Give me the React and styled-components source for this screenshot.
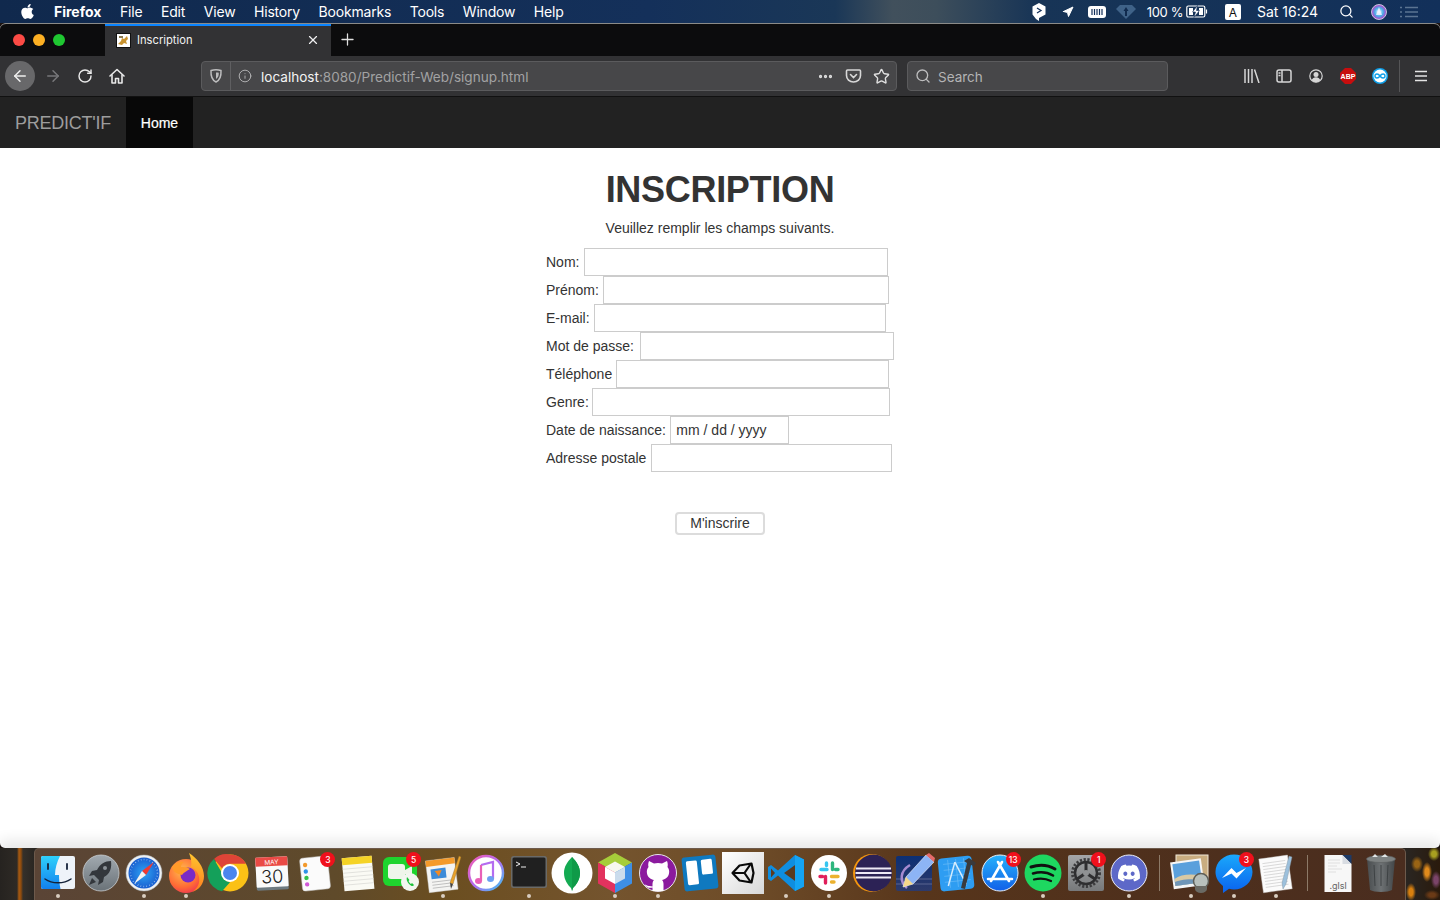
import React from 'react';
import styled, { createGlobalStyle } from 'styled-components';
import { FaApple, FaDiscord } from 'react-icons/fa';
import { ArrowLeft, ArrowRight, RotateCw, Info, Ellipsis, Star, Search, X, Plus, Navigation } from 'lucide-react';

const GlobalStyle = createGlobalStyle`
  html, body {
    margin: 0;
    padding: 0;
    height: 100%;
    overflow: hidden;
    background: #1a1210;
  }
  * { box-sizing: border-box; }
`;

const Screen = styled.div`
  width: 1440px;
  height: 900px;
  display: flex;
  flex-direction: column;
  overflow: hidden;
  font-family: "Liberation Sans", Arial, sans-serif;
`;

/* mac menu bar */
const MenuBar = styled.div`
  height: 23px;
  flex: none;
  display: flex;
  align-items: center;
  padding: 0 22px 0 19px;
  color: #fff;
  font-family: Inter, "Liberation Sans", sans-serif;
  font-size: 14px;
  background: linear-gradient(90deg, #10294d 0%, #14305a 45%, #1a3757 58%, #41505c 62%, #3d4e5b 65%, #173456 72%, #12305a 100%);
`;

const MenuItems = styled.div`
  display: flex;
  align-items: center;
  gap: 18.6px;
  margin-left: 18px;
`;

const MenuItem = styled.span`
  font-weight: ${(p) => (p.$bold ? 700 : 400)};
  letter-spacing: ${(p) => (p.$bold ? '0' : '-0.2px')};
`;

const MenuStatus = styled.div`
  margin-left: auto;
  display: flex;
  align-items: center;
  height: 100%;
`;

const StatusSlot = styled.div`
  width: ${(p) => p.$w}px;
  margin-left: ${(p) => p.$ml || 0}px;
  flex: none;
  display: flex;
  align-items: center;
  justify-content: center;
  white-space: nowrap;
`;

const BatteryText = styled.span`
  font-size: 13px;
  letter-spacing: -0.3px;
`;

const ClockText = styled.span`
  font-size: 14px;
`;

/* browser window */
const BrowserWindow = styled.div`
  flex: 1;
  display: flex;
  flex-direction: column;
  background: #fff;
  border-radius: 6px 6px 5px 5px;
  overflow: hidden;
  border-top: 1px solid #8b8b88;
`;

const TabStrip = styled.div`
  height: 32px;
  flex: none;
  display: flex;
  align-items: stretch;
  background: #0c0c0d;
`;

const Lights = styled.div`
  width: 105px;
  display: flex;
  align-items: center;
  gap: 8px;
  padding-left: 13px;
`;

const Light = styled.span`
  width: 12px;
  height: 12px;
  border-radius: 50%;
  background: ${(p) => p.$color};
`;

const ActiveTab = styled.div`
  width: 226px;
  display: flex;
  align-items: center;
  padding: 0 0 2px 11px;
  background: #323234;
  border-top: 2px solid #0a84ff;
  color: #f2f2f2;
  font-family: Inter, "Liberation Sans", sans-serif;
  font-size: 11.2px;
`;

const TabTitle = styled.span`
  margin-left: 6px;
  flex: 1;
`;

const TabClose = styled.span`
  width: 36px;
  display: flex;
  justify-content: center;
`;

const NewTab = styled.div`
  width: 32px;
  padding-bottom: 2px;
  display: flex;
  align-items: center;
  justify-content: center;
`;

const Toolbar = styled.div`
  height: 41px;
  flex: none;
  display: flex;
  align-items: center;
  padding-left: 5px;
  background: #323234;
  color: #e4e4e4;
  border-bottom: 1px solid #111;
  font-family: Inter, "Liberation Sans", sans-serif;
`;

const BackButton = styled.div`
  width: 30px;
  height: 30px;
  border-radius: 50%;
  background: #68686a;
  display: flex;
  align-items: center;
  justify-content: center;
  margin-right: 2px;
`;

const ToolSlot = styled.div`
  width: 32px;
  height: 30px;
  flex: none;
  margin-left: ${(p) => p.$ml || 0}px;
  display: flex;
  align-items: center;
  justify-content: center;
`;

const UrlBar = styled.div`
  width: ${(p) => p.$w}px;
  height: 30px;
  flex: none;
  margin-left: ${(p) => p.$ml}px;
  display: flex;
  align-items: center;
  background: #474749;
  border: 1px solid #5b5b5d;
  border-radius: 4px;
  font-size: 14px;
`;

const UrlSlot = styled.span`
  width: ${(p) => p.$w}px;
  flex: none;
  height: 100%;
  display: flex;
  align-items: center;
  justify-content: center;
  border-right: ${(p) => (p.$divider ? '1px solid #5f5f61' : 'none')};
`;

const UrlText = styled.span`
  flex: 1;
  margin-left: 2px;
  padding-top: 2px;
  color: #a2a2a3;
  font-size: 13.55px;
  white-space: nowrap;
`;

const UrlHost = styled.span`
  color: #f4f4f4;
`;

const SearchText = styled.span`
  padding-top: 2px;
  color: #b4b4b5;
  font-size: 13.5px;
`;

const ToolDivider = styled.div`
  width: 1px;
  height: 32px;
  background: #555557;
  margin: 0 5px 0 3px;
`;

/* site navbar */
const NavBar = styled.nav`
  height: 51px;
  flex: none;
  display: flex;
  background: #222;
`;

const Brand = styled.span`
  width: 126px;
  padding: 2px 0 0 15px;
  display: flex;
  align-items: center;
  color: #9d9d9d;
  font-size: 18px;
  letter-spacing: -0.25px;
`;

const NavActive = styled.span`
  width: 67px;
  display: flex;
  align-items: center;
  justify-content: center;
  background: #080808;
  color: #fff;
  font-size: 14px;
  -webkit-text-stroke: 0.2px #fff;
`;

/* page */
const Page = styled.main`
  flex: 1;
  display: flex;
  flex-direction: column;
  align-items: center;
  color: #333;
  font-size: 14px;
  line-height: 20px;
`;

const Title = styled.h1`
  margin: 22px 0 8px;
  font-size: 36px;
  line-height: 39.6px;
  font-weight: 700;
  letter-spacing: -0.3px;
  color: #333;
`;

const Lead = styled.p`
  margin: 0 0 10px;
  color: #333;
`;

const SignupForm = styled.form`
  width: 348px;
  display: flex;
  flex-direction: column;
`;

const Row = styled.label`
  height: 28px;
  display: flex;
  align-items: center;
  gap: ${(p) => p.$gap}px;
  white-space: nowrap;
`;

const Field = styled.input`
  width: ${(p) => p.$w}px;
  height: 28px;
  padding: 0 5.5px;
  border: 1px solid #ccc;
  border-radius: 0;
  background: #fff;
  outline: none;
  font-family: inherit;
  font-size: 14px;
  color: #333;
  &::placeholder { color: #333; opacity: 1; }
`;

const SubmitButton = styled.button`
  width: 90px;
  height: 23px;
  margin-top: 40px;
  padding: 0;
  background: #fff;
  border: 2px solid #dcdcdc;
  border-radius: 4px;
  font-family: inherit;
  font-size: 14px;
  color: #333;
`;

/* dock */
const DockArea = styled.div`
  height: 52px;
  flex: none;
  display: flex;
  justify-content: center;
  background:
    radial-gradient(ellipse 6px 7px at 1434px 6px, #a8a020 40%, transparent),
    radial-gradient(ellipse 5px 10px at 1427px 24px, #e08a1c 40%, transparent),
    radial-gradient(ellipse 6px 8px at 1417px 16px, #9a6414 40%, transparent),
    radial-gradient(ellipse 5px 9px at 1436px 32px, #7a4468 40%, transparent),
    radial-gradient(ellipse 5px 9px at 1411px 44px, #d8800f 40%, transparent),
    radial-gradient(ellipse 8px 5px at 1432px 47px, #6a3a16 40%, transparent),
    linear-gradient(90deg, #262320 0, #2e2a25 17px, #a85a10 19px, #8c4a0e 21px, #35302a 23px, #2a2622 34px, #2a2622 1406px, #2a1a0c 100%);
  box-shadow: 0 -8px 12px rgba(0, 0, 0, 0.09);
`;

const Dock = styled.div`
  width: 1372px;
  height: 52px;
  display: flex;
  align-items: flex-start;
  padding: 2px 2px 0 1.6px;
  border: 1px solid #6d5a4c;
  border-bottom: 0;
  border-radius: 5px 5px 0 0;
  background: linear-gradient(90deg, #5a4436 0%, #5f4a2a 22%, #6b4e20 30%, #74542e 42%, #6e4c28 52%, #57351b 65%, #4f301c 80%, #4a2d1f 100%);
`;

const DockSlot = styled.div`
  position: relative;
  width: 42.84px;
  height: 44px;
  flex: none;
  display: flex;
  justify-content: center;
  svg { flex: none; overflow: visible; }
`;

const DockDot = styled.span`
  position: absolute;
  left: 50%;
  bottom: -3px;
  width: 4px;
  height: 4px;
  margin-left: -2px;
  border-radius: 50%;
  background: #d8cdc0;
`;

const DockBadge = styled.span`
  position: absolute;
  top: 1px;
  right: 1px;
  width: 15px;
  height: 15px;
  border-radius: 50%;
  background: #f0101c;
  color: #fff;
  display: flex;
  align-items: center;
  justify-content: center;
  font-family: Inter, "Liberation Sans", sans-serif;
  font-size: 8.5px;
  font-weight: 500;
`;

const DockSeparator = styled.div`
  width: 19.2px;
  flex: none;
  height: 36px;
  margin-top: 4px;
  display: flex;
  justify-content: center;
  &::after {
    content: '';
    width: 1px;
    background: #8d7a68;
  }
`;

const TEXT_FONT = 'Inter, "Liberation Sans", sans-serif';

const Svg = ({ size = 44, box = 44, children, ...rest }) => (
  <svg width={size} height={size} viewBox={`0 0 ${box} ${box}`} fill="none" {...rest}>
    {children}
  </svg>
);

const Finder = () => (
  <Svg>
    <defs>
      <linearGradient id="fl" x1="0" y1="0" x2="0" y2="1"><stop offset="0" stopColor="#2fd0fb" /><stop offset="1" stopColor="#1280ee" /></linearGradient>
    </defs>
    <rect x="5" y="5" width="34" height="33" rx="2" fill="#eef3f9" />
    <path d="M7 5h17c-3 6-5 12-5 19h4c0 5 .5 9 1.500 14H7a2 2 0 0 1-2-2V7a2 2 0 0 1 2-2z" fill="url(#fl)" />
    <path d="M12 13v5M31 13v5" stroke="#15233a" strokeWidth="1.800" strokeLinecap="round" />
    <path d="M9 28c7 5 19 5 26 0" stroke="#15233a" strokeWidth="1.500" strokeLinecap="round" />
  </Svg>
);

const Launchpad = () => (
  <Svg>
    <defs>
      <linearGradient id="lp" x1="0" y1="0" x2="0" y2="1"><stop offset="0" stopColor="#a2aab0" /><stop offset="1" stopColor="#6a7278" /></linearGradient>
    </defs>
    <circle cx="22" cy="22" r="18" fill="url(#lp)" stroke="#c8ccce" strokeWidth="0.800" />
    <path d="M32 10c-6 0-11 3-14 9l-5 1-3 5 5-1 5 5-1 5 5-3 1-5c6-3 8-9 7-16z" fill="#33373c" />
    <path d="M13 27l-3 7 7-3z" fill="#33373c" />
    <circle cx="26" cy="17" r="2" fill="#8c9298" />
  </Svg>
);

const Safari = () => (
  <Svg>
    <defs>
      <radialGradient id="sf"><stop offset="0" stopColor="#2ea4f4" /><stop offset="1" stopColor="#1a5fd0" /></radialGradient>
    </defs>
    <circle cx="22" cy="22" r="18" fill="#eef1f3" stroke="#aab0b5" strokeWidth="0.500" />
    <circle cx="22" cy="22" r="15.500" fill="url(#sf)" />
    <circle cx="22" cy="22" r="13.500" stroke="#cfe6fa" strokeWidth="1.500" strokeDasharray="0.500 2.500" />
    <path d="M32 11l-12 9 4 4z" fill="#f03a32" />
    <path d="M12 33l8-13 4 4z" fill="#f2f2f2" />
  </Svg>
);

const Firefox = () => (
  <Svg>
    <defs>
      <radialGradient id="ff1" cx="0.400" cy="0.350" r="0.800"><stop offset="0" stopColor="#ffbd4f" /><stop offset="0.600" stopColor="#ff6a35" /><stop offset="1" stopColor="#e8205c" /></radialGradient>
      <linearGradient id="ff2" x1="0.600" y1="0" x2="0.500" y2="1"><stop offset="0" stopColor="#ffc82f" /><stop offset="1" stopColor="#ff7a1f" /></linearGradient>
    </defs>
    <circle cx="21" cy="25" r="17" fill="url(#ff1)" />
    <path d="M24 2c8 5 15 14 15 23 0 8-5 14-12 16 6-4 8-9 7-15-1-5-4-8-8-10 1-4 0-9-2-14z" fill="url(#ff2)" />
    <circle cx="23" cy="24" r="7.500" fill="#7a2bc6" />
    <path d="M7 16c3-5 8-6 12-5-2 1-3 3-3 5 3 0 6 0 9 2-3 2-6 3-8 6-5-1-9-3-10-8z" fill="#ff9a2a" />
  </Svg>
);

const Chrome = () => (
  <Svg>
    <g transform="translate(1 0)">
      <circle cx="22" cy="22" r="18.500" fill="#fbc116" />
      <path d="M22 3.500a18.500 18.500 0 0 1 16 9.250H22a9.250 9.250 0 0 0-8 4.620L6 7.900A18.500 18.500 0 0 1 22 3.500z" fill="#de4437" />
      <path d="M5.900 8.100L14 22a9.250 9.250 0 0 0 8 9.250l-8 9.100A18.500 18.500 0 0 1 5.900 8.100z" fill="#14a05a" />
      <circle cx="22" cy="22" r="9" fill="#fff" />
      <circle cx="22" cy="22" r="7" fill="#4a85ed" />
    </g>
  </Svg>
);

const Calendar = () => (
  <Svg>
    <g transform="rotate(-3 22 22)">
      <rect x="6" y="7" width="32" height="32" rx="1.500" fill="#6e7a80" />
      <rect x="6" y="6" width="32" height="30" rx="1" fill="#fafafa" />
      <rect x="6" y="6" width="32" height="9" fill="#ea4a45" />
      <text x="22" y="13.500" textAnchor="middle" fontFamily={TEXT_FONT} fontSize="6.500" fill="#fff">MAY</text>
      <text x="22" y="32" textAnchor="middle" fontFamily={TEXT_FONT} fontSize="18" fontWeight="300" fill="#222">30</text>
    </g>
  </Svg>
);

const Reminders = () => (
  <Svg>
    <g transform="rotate(-6 22 22)">
      <rect x="8" y="6" width="28" height="33" rx="3" fill="#fbfbfb" stroke="#c9c9c9" strokeWidth="0.500" />
      <circle cx="13" cy="13" r="2.200" fill="#f39a2c" />
      <circle cx="13" cy="19.500" r="2.200" fill="#2f93e8" />
      <circle cx="13" cy="26" r="2.200" fill="#35c24a" />
      <circle cx="13" cy="32.500" r="2.200" fill="#d159d8" />
    </g>
  </Svg>
);

const Notes = () => (
  <Svg>
    <g transform="rotate(-5 22 22)">
      <rect x="7" y="6" width="30" height="33" fill="#fafaf4" />
      <rect x="7" y="6" width="30" height="7" fill="#f5d326" />
      <path d="M7 17h30M7 21h30M7 25h30M7 29h30M7 33h30" stroke="#d8d8d4" strokeWidth="0.700" />
    </g>
  </Svg>
);

const FaceTime = () => (
  <Svg>
    <rect x="4" y="6" width="34" height="29" rx="6" fill="#1ed42e" />
    <rect x="9" y="13" width="17" height="15" rx="3" fill="#eef5ea" />
    <path d="M26 19l7-4v12l-7-4z" fill="#eef5ea" />
    <circle cx="31" cy="31" r="9" fill="#f2f5f0" />
    <path d="M28 26c-1 2 0 5 2 7s4 3 5 1l-2-2-1 1c-1-.5-2-2-2.500-3l1-1z" fill="#1cc23a" />
  </Svg>
);

const Pages = () => (
  <Svg>
    <g transform="rotate(-7 21 22)">
      <rect x="6" y="8" width="29" height="32" fill="#f4f4f2" stroke="#c8c8c8" strokeWidth="0.400" />
      <rect x="6" y="8" width="29" height="6" fill="#f49a2a" />
      <rect x="10" y="17" width="15" height="10" fill="#3c8bd8" />
      <path d="M14 19h7l-3.500 6z" fill="#f08a24" />
      <path d="M10 30h21M10 33h21M10 36h21" stroke="#b5b5b5" strokeWidth="0.800" />
    </g>
    <path d="M38 5l2 1-8 27-3-1z" fill="#e8a12a" stroke="#8a6a2a" strokeWidth="0.400" />
    <path d="M29 32l3 1-2 5z" fill="#444" />
  </Svg>
);

const Music = () => (
  <Svg>
    <defs>
      <linearGradient id="mu" x1="0" y1="0" x2="1" y2="1"><stop offset="0" stopColor="#f35bb0" /><stop offset="0.500" stopColor="#b46cf0" /><stop offset="1" stopColor="#3cc2f0" /></linearGradient>
    </defs>
    <circle cx="22" cy="22" r="17" fill="#fff" stroke="url(#mu)" strokeWidth="2.500" />
    <path d="M17 14l12-3v17" stroke="#b46cf0" strokeWidth="2.200" />
    <path d="M17 14v16" stroke="#e860b8" strokeWidth="2.200" />
    <ellipse cx="14.500" cy="30" rx="3.500" ry="3" fill="#e860b8" />
    <ellipse cx="26.500" cy="28" rx="3.500" ry="3" fill="#6ca0f0" />
  </Svg>
);

const Terminal = () => (
  <Svg>
    <rect x="4" y="5" width="36" height="32" rx="2.500" fill="#6a6a68" />
    <rect x="5.500" y="6.500" width="33" height="29" rx="1.500" fill="#202020" />
    <path d="M9 11l4 2-4 2" stroke="#eee" strokeWidth="1" />
    <path d="M14 16h5" stroke="#eee" strokeWidth="1" />
  </Svg>
);

const Mongo = () => (
  <Svg>
    <circle cx="22" cy="22" r="20.500" fill="#fff" />
    <path d="M22 6c5 5 8 10 8 16 0 7-4 12-7 15l-1 3-1-3c-3-3-7-8-7-15 0-6 3-11 8-16z" fill="#13aa52" />
    <path d="M22 6c5 5 8 10 8 16 0 7-4 12-7 15l-1 3z" fill="#0f9a48" />
  </Svg>
);

const NetBeans = () => (
  <Svg>
    <path d="M22 2l17 9.500-17 9.500L5 11.500z" fill="#a6cd3a" />
    <path d="M5 11.500L22 21v21L5 32.500z" fill="#e2325e" />
    <path d="M39 11.500L22 21v21l17-9.500z" fill="#3e8fe6" />
    <path d="M22 10.500l10 5.500-10 5.500-10-5.500z" fill="#f6f8ee" />
    <path d="M12 16l10 5.500V33l-10-5.500z" fill="#ffffff" />
    <path d="M32 16l-10 5.500V33l10-5.500z" fill="#cbdcec" />
  </Svg>
);

const GitHub = () => (
  <Svg>
    <circle cx="22" cy="22" r="18.500" fill="#8b1a9e" stroke="#e8e4ea" strokeWidth="1" />
    <path d="M13 10l5 2.500c2.500-.7 5.500-.7 8 0l5-2.500c.8 2 1 4 .5 6 1.500 2 2 4 1.500 6.500-.8 4-4 6-7 6.500 1 1 1.500 2.500 1.500 4V40h-11v-3.500c-3 .8-6 .5-8-3 1.500 0 3 2 5 1.500l3 .5V33c0-1.500.5-3 1.500-4-3-.5-6.200-2.500-7-6.500-.5-2.500 0-4.500 1.500-6.500-.5-2-.3-4 .5-6z" fill="#fff" />
  </Svg>
);

const Trello = () => (
  <Svg>
    <g transform="rotate(-6 22 22)">
      <rect x="5" y="5" width="34" height="34" rx="3" fill="#0f79bf" />
      <rect x="9" y="9" width="11" height="24" rx="1.500" fill="#fff" />
      <rect x="24" y="9" width="11" height="15" rx="1.500" fill="#fff" />
    </g>
  </Svg>
);

const Unity = () => (
  <Svg>
    <defs>
      <linearGradient id="un" x1="0" y1="0" x2="1" y2="1"><stop offset="0" stopColor="#fff" /><stop offset="1" stopColor="#d8d8d8" /></linearGradient>
    </defs>
    <rect x="1" y="1" width="42" height="42" fill="url(#un)" />
    <path d="M11.500 22l7-7.500 12-2 2 9.500-2 9.500-12-2z" stroke="#0a0a0a" strokeWidth="2.200" strokeLinejoin="round" />
    <path d="M23.500 22H11.500M23.500 22l6.500-9.500M23.500 22l6.500 9.500" stroke="#0a0a0a" strokeWidth="2.200" />
  </Svg>
);

const VsCode = () => (
  <Svg>
    <path d="M31 4l9 4.500v27L31 40 14 24.500 7 30l-3-2v-12l3-2 7 5.500z" fill="#0f8ee0" />
    <path d="M31 4l9 4.500v27L31 40V30L20 22l11-8z" fill="#14a4f4" />
    <path d="M31 14L20 22l11 8z" fill="#5a3a20" />
    <path d="M7 17.500L11 22l-4 4.500z" fill="#5a3a20" />
  </Svg>
);

const Slack = () => (
  <Svg>
    <circle cx="22" cy="22" r="18" fill="#fff" />
    <path d="M14 18.500h6M19.500 12v2.500" stroke="#36c5f0" strokeWidth="3.400" strokeLinecap="round" />
    <path d="M25.500 12v6.500M31 18.500h-2.500" stroke="#2eb67d" strokeWidth="3.400" strokeLinecap="round" />
    <path d="M24.500 25.500H31M24.500 31h2.500" stroke="#ecb22e" strokeWidth="3.400" strokeLinecap="round" />
    <path d="M18.500 25.500V32M13 25.500h2.500" stroke="#e01e5a" strokeWidth="3.400" strokeLinecap="round" />
  </Svg>
);

const Eclipse = () => (
  <Svg>
    <circle cx="22" cy="22" r="19" fill="#f4960e" />
    <circle cx="23.500" cy="22" r="18.500" fill="#2c2255" />
    <path d="M6 17.500h35M5.500 22h36M6 26.500h35" stroke="#eee9f6" strokeWidth="1.800" />
  </Svg>
);

const Coda = () => (
  <Svg>
    <defs>
      <linearGradient id="cd" x1="0" y1="0" x2="0" y2="1"><stop offset="0" stopColor="#0c2f74" /><stop offset="1" stopColor="#2e3a6a" /></linearGradient>
    </defs>
    <rect x="3" y="5" width="36" height="35" rx="2" fill="url(#cd)" />
    <path d="M3 28h36M3 33h36" stroke="#5a6590" strokeWidth="1" />
    <path d="M14 37c-8-7-7-17 3-23" stroke="#a58ad0" strokeWidth="2.500" />
    <path d="M33 4l8 7-21 22-10 3 3-10z" fill="#8db4f5" stroke="#f4f6ff" strokeWidth="0.600" />
    <path d="M13 26l7 7-10 3z" fill="#f5d78a" />
    <path d="M33 4l3-2 6 5-1 4z" fill="#e56a6a" />
  </Svg>
);

const Xcode = () => (
  <Svg>
    <g transform="rotate(-6 22 22)">
      <rect x="4" y="6" width="34" height="33" rx="4" fill="#2e9df2" />
      <path d="M9 12h26M9 18h26M9 24h26M9 30h26M14 8v28M22 8v28M30 8v28" stroke="#7cc4f7" strokeWidth="0.500" />
      <path d="M21 11l9 23M21 11l-9 23" stroke="#d6ecfd" strokeWidth="1.500" />
    </g>
    <path d="M34 7l7 5-2 3-3-1-6 24-4-1 6-25-3-2z" fill="#3a3a3c" />
  </Svg>
);

const AppStore = () => (
  <Svg>
    <defs>
      <linearGradient id="as" x1="0" y1="0" x2="0" y2="1"><stop offset="0" stopColor="#25b2fb" /><stop offset="1" stopColor="#1260e8" /></linearGradient>
    </defs>
    <circle cx="22" cy="22" r="18" fill="url(#as)" stroke="#e8eef5" strokeWidth="1" />
    <path d="M24 11L13 30M20 11l11 19M10 28h24" stroke="#fff" strokeWidth="2.600" strokeLinecap="round" />
  </Svg>
);

const Spotify = () => (
  <Svg>
    <circle cx="22" cy="22" r="18.500" fill="#1ed760" />
    <path d="M10 16c8-2.500 17-2 24 2" stroke="#111" strokeWidth="3" strokeLinecap="round" />
    <path d="M12 22.500c7-2 14-1.500 20 2" stroke="#111" strokeWidth="2.600" strokeLinecap="round" />
    <path d="M13 28.500c6-1.500 12-1 17 1.500" stroke="#111" strokeWidth="2.200" strokeLinecap="round" />
  </Svg>
);

const SysPrefs = () => (
  <Svg>
    <defs>
      <linearGradient id="sp" x1="0" y1="0" x2="0" y2="1"><stop offset="0" stopColor="#a4a6a8" /><stop offset="1" stopColor="#77797b" /></linearGradient>
    </defs>
    <rect x="4" y="4" width="36" height="36" rx="2" fill="url(#sp)" />
    <circle cx="22" cy="22" r="13.500" stroke="#3c3c3e" strokeWidth="3" strokeDasharray="2.200 1.600" />
    <circle cx="22" cy="22" r="11" stroke="#2e2e30" strokeWidth="2.500" />
    <path d="M22 22V12M22 22l-9 6M22 22l9 6" stroke="#2e2e30" strokeWidth="3" />
    <circle cx="22" cy="22" r="3" fill="#8f9193" />
  </Svg>
);

const Discord = () => (
  <Svg>
    <circle cx="22" cy="22" r="18" fill="#5d68c8" stroke="#eceef8" strokeWidth="1" />
    <FaDiscord x="10" y="10" size="24" color="#fff" />
  </Svg>
);

const Preview = () => (
  <Svg>
    <rect x="7" y="4" width="32" height="27" fill="#c9ad80" stroke="#f0e8d8" strokeWidth="1" />
    <g transform="rotate(-8 20 24)">
      <rect x="3" y="9" width="31" height="27" fill="#f6f6f6" />
      <rect x="5" y="11" width="27" height="22" fill="#5aa0dc" />
      <path d="M5 26c7-4 16-3 27 0v7H5z" fill="#d9c9a4" />
      <path d="M5 29c7-2 14-1 27 1v3H5z" fill="#6f96b8" />
    </g>
    <circle cx="32" cy="30" r="7.500" fill="#b8c0bc" stroke="#5e5e58" strokeWidth="1.500" />
    <path d="M26 38a6 4 0 0 0 12 0v-3H26z" fill="#6a6a64" />
  </Svg>
);

const Messenger = () => (
  <Svg>
    <defs>
      <linearGradient id="ms" x1="0" y1="0" x2="0" y2="1"><stop offset="0" stopColor="#1aa8fb" /><stop offset="1" stopColor="#0a62ee" /></linearGradient>
    </defs>
    <path d="M22 3.500c10 0 18.500 7.500 18.500 17.500S32 38.500 22 38.500c-1.800 0-3.500-.2-5-.7L11 42v-7C6.500 31.500 3.500 26.500 3.500 21 3.500 11 12 3.500 22 3.500z" fill="url(#ms)" />
    <path d="M10 27l9.500-10 5 5 9.500-5-9.500 10.500-5-5z" fill="#fff" />
  </Svg>
);

const TextEdit = () => (
  <Svg>
    <g transform="rotate(-8 21 23)">
      <rect x="7" y="6" width="29" height="34" fill="#fbfbfb" stroke="#cfcfcf" strokeWidth="0.400" />
      <path d="M10 11h23M10 14h23M10 17h23M10 20h23M10 23h23M10 26h23M10 29h23M10 32h23M10 35h23" stroke="#c4c4c4" strokeWidth="0.600" />
    </g>
    <path d="M35 5l3 1-6 27-3 5-1-6z" fill="#9cc0dc" stroke="#7d8f9c" strokeWidth="0.400" />
  </Svg>
);

const GlslFile = () => (
  <Svg>
    <path d="M8.500 4h18l9 9v28h-27z" fill="#f7f7f7" />
    <path d="M26.500 4h9v9z" fill="#1d3a66" />
    <path d="M26.500 4l9 9h-9z" fill="#d8dce2" />
    <path d="M12 9h12M12 12h12M12 15h9M12 18h14M12 21h8" stroke="#d2d2d2" strokeWidth="0.600" />
    <text x="22" y="38" textAnchor="middle" fontFamily={TEXT_FONT} fontSize="9" fill="#666">.glsl</text>
  </Svg>
);

const Trash = () => (
  <Svg>
    <defs>
      <linearGradient id="tr" x1="0" y1="0" x2="1" y2="0"><stop offset="0" stopColor="#484c4e" /><stop offset="0.500" stopColor="#6e7274" /><stop offset="1" stopColor="#424648" /></linearGradient>
    </defs>
    <path d="M8 8h28l-3 31c-4 2.500-18 2.500-22 0z" fill="url(#tr)" />
    <ellipse cx="22" cy="8" rx="14.500" ry="3.500" fill="#7e8282" stroke="#5a5e5e" strokeWidth="0.600" />
    <path d="M13 6l3-3 3 3zM22 6l4-3 3 3z" fill="#dfe3e3" />
    <path d="M15 14l1 21M22 14v21M29 14l-1 21" stroke="#3e4244" strokeWidth="1" />
  </Svg>
);

const FIRST_GROUP = [
  { name: 'finder', Icon: Finder, dot: true },
  { name: 'launchpad', Icon: Launchpad },
  { name: 'safari', Icon: Safari, dot: true },
  { name: 'firefox', Icon: Firefox, dot: true },
  { name: 'chrome', Icon: Chrome },
  { name: 'calendar', Icon: Calendar },
  { name: 'reminders', Icon: Reminders, badge: 3 },
  { name: 'notes', Icon: Notes },
  { name: 'facetime', Icon: FaceTime, badge: 5 },
  { name: 'pages', Icon: Pages, dot: true },
  { name: 'music', Icon: Music },
  { name: 'terminal', Icon: Terminal, dot: true },
  { name: 'mongo', Icon: Mongo },
  { name: 'netbeans', Icon: NetBeans, dot: true },
  { name: 'github', Icon: GitHub, dot: true },
  { name: 'trello', Icon: Trello },
  { name: 'unity', Icon: Unity },
  { name: 'vscode', Icon: VsCode, dot: true },
  { name: 'slack', Icon: Slack, dot: true },
  { name: 'eclipse', Icon: Eclipse },
  { name: 'coda', Icon: Coda },
  { name: 'xcode', Icon: Xcode },
  { name: 'appstore', Icon: AppStore, badge: 13 },
  { name: 'spotify', Icon: Spotify, dot: true },
  { name: 'prefs', Icon: SysPrefs, badge: 1 },
  { name: 'discord', Icon: Discord, dot: true },
];

const SECOND_GROUP = [
  { name: 'preview', Icon: Preview, dot: true },
  { name: 'messenger', Icon: Messenger, dot: true, badge: 3 },
  { name: 'textedit', Icon: TextEdit, dot: true },
];

const THIRD_GROUP = [
  { name: 'glsl', Icon: GlslFile },
  { name: 'trash', Icon: Trash },
];

const DockItem = ({ Icon, dot, badge }) => (
  <DockSlot>
    <Icon />
    {badge && <DockBadge>{badge}</DockBadge>}
    {dot && <DockDot />}
  </DockSlot>
);

const FIELDS = [
  { label: 'Nom:', type: 'text', w: 304, gap: 5 },
  { label: 'Prénom:', type: 'text', w: 286, gap: 4 },
  { label: 'E-mail:', type: 'email', w: 292, gap: 4 },
  { label: 'Mot de passe:', type: 'password', w: 254, gap: 6 },
  { label: 'Téléphone', type: 'text', w: 273, gap: 4 },
  { label: 'Genre:', type: 'text', w: 298, gap: 3 },
  { label: 'Date de naissance:', type: 'text', w: 119, gap: 4, placeholder: 'mm / dd / yyyy' },
  { label: 'Adresse postale', type: 'text', w: 241, gap: 5 },
];

const MENU = ['File', 'Edit', 'View', 'History', 'Bookmarks', 'Tools', 'Window', 'Help'];

const Favicon = () => (
  <svg width="15" height="15" viewBox="0 0 15 15">
    <rect x="0.500" y="0.500" width="14" height="14" fill="#fff" stroke="#111" />
    <path d="M2 11l3-3 1-3 2 1 3-3 1 3-2 2 1 3-3-1-2 2z" fill="#c8922e" />
    <path d="M3 3h4v2H3z" fill="#8a7a50" />
  </svg>
);

const ShieldIcon = () => (
  <svg width="14" height="16" viewBox="0 0 14 16" fill="none" stroke="#bdbdbe" strokeWidth="1.500">
    <path d="M2 2.500c3-.8 7-.8 10 0 .3 5-.8 9.500-5 11.500-4.200-2-5.300-6.500-5-11.500z" />
    <path d="M7 4.500c1 0 2 .1 2.800.3 0 3-.6 4.800-2.800 6.200z" fill="#bdbdbe" stroke="none" />
  </svg>
);

const PocketIcon = () => (
  <svg width="17" height="16" viewBox="0 0 17 16" fill="none" stroke="#d8d8d8" strokeWidth="1.600">
    <path d="M2.500 2h12c.6 0 1 .4 1 1v4.500c0 3.500-3 6.500-7 6.500s-7-3-7-6.500V3c0-.6.400-1 1-1z" />
    <path d="M5.500 6.500l3 3 3-3" strokeLinecap="round" />
  </svg>
);

const HomeIcon = () => (
  <svg width="16" height="16" viewBox="0 0 16 16" fill="none" stroke="#e8e8e8" strokeWidth="1.600" strokeLinejoin="round">
    <path d="M1 8l7-6.500L15 8" strokeLinecap="round" />
    <path d="M3 6.500V15h3.500v-4.500h3V15H13V6.500" />
  </svg>
);

const LibraryIcon = () => (
  <svg width="16" height="14" viewBox="0 0 16 14" fill="none" stroke="#d6d6d6" strokeWidth="1.500">
    <path d="M1 0v14M4.500 0v14M8 0v14M10.500 0.500l4.500 13.500" />
  </svg>
);

const SidebarIcon = () => (
  <svg width="16" height="14" viewBox="0 0 16 14" fill="none" stroke="#d6d6d6" strokeWidth="1.500">
    <rect x="1" y="1" width="14" height="12" rx="2" />
    <path d="M6 1v12M2.500 4H4.500M2.500 6.500H4.500" />
  </svg>
);

const AccountIcon = () => (
  <svg width="14" height="14" viewBox="0 0 14 14" fill="none">
    <circle cx="7" cy="7" r="6.200" stroke="#d6d6d6" strokeWidth="1.200" />
    <circle cx="7" cy="5.500" r="2.500" fill="#d6d6d6" />
    <path d="M2.600 11.200c.8-2 2.500-3 4.400-3s3.600 1 4.400 3c-1.100 1.200-2.700 2-4.400 2s-3.300-.8-4.400-2z" fill="#d6d6d6" />
  </svg>
);

const AbpIcon = () => (
  <svg width="16" height="16" viewBox="0 0 16 16">
    <path d="M5 0h6l5 5v6l-5 5H5l-5-5V5z" fill="#c70d0e" />
    <text x="8" y="10.500" textAnchor="middle" fontFamily='"Liberation Sans", sans-serif' fontSize="7" fontWeight="700" fill="#fff">ABP</text>
  </svg>
);

const InfinityIcon = () => (
  <svg width="16" height="16" viewBox="0 0 16 16" fill="none">
    <circle cx="8" cy="8" r="8" fill="#0fa0ea" />
    <circle cx="8" cy="8" r="6.500" fill="#fff" />
    <path d="M8 8c-1-1.500-2-2-3-2a2 2 0 0 0 0 4c1 0 2-.5 3-2zm0 0c1-1.500 2-2 3-2a2 2 0 0 1 0 4c-1 0-2-.5-3-2z" stroke="#0fa0ea" strokeWidth="1.400" />
  </svg>
);

const Hamburger = () => (
  <svg width="12" height="12" viewBox="0 0 12 12" stroke="#e4e4e4" strokeWidth="1.500">
    <path d="M0 1.500h12M0 6h12M0 10.500h12" />
  </svg>
);

const DeeplIcon = () => (
  <svg width="14" height="18" viewBox="0 0 14 18">
    <path d="M7 0l6.500 3.500v8L7 15v3l-3-2L.5 11.500v-8z" fill="#fff" />
    <path d="M5 5l4 2.500L5 10" fill="none" stroke="#14305a" strokeWidth="1.300" />
  </svg>
);

const KeyboardIcon = () => (
  <svg width="18" height="14" viewBox="0 0 18 14">
    <rect x="0" y="1" width="18" height="12" rx="3" fill="#fff" />
    <path d="M4 4v6M6.500 4v6M9 4v6M11.500 4v6M14 4v6" stroke="#14305a" strokeWidth="1.200" />
  </svg>
);

const WifiIcon = () => (
  <svg width="20" height="14" viewBox="0 0 20 14">
    <path d="M0 4l4-4h12l4 4-10 10z" fill="#3f6288" />
    <path d="M10 2l2.500 4h-1.500v5H9V6H7.500z" fill="#102a4e" />
  </svg>
);

const BatteryIcon = () => (
  <svg width="22" height="13" viewBox="0 0 22 13" fill="none">
    <rect x="0.800" y="1" width="18" height="11" rx="1.500" stroke="#fff" strokeWidth="1.200" />
    <path d="M20.500 4.500v4" stroke="#fff" strokeWidth="1.200" />
    <path d="M3 3h4v7H3zM13 3h4v7h-4z" fill="#fff" />
    <path d="M11.500 0.500L6.500 7h3L8 12.500 13.500 5.500h-3z" fill="#fff" stroke="#14305a" strokeWidth="0.600" />
  </svg>
);

const InputBadge = () => (
  <svg width="16" height="16" viewBox="0 0 16 16">
    <rect width="16" height="16" rx="2" fill="#fff" />
    <text x="8" y="12.500" textAnchor="middle" fontFamily={TEXT_FONT} fontSize="12" fill="#111">A</text>
  </svg>
);

const SiriIcon = () => (
  <svg width="16" height="16" viewBox="0 0 16 16">
    <defs>
      <radialGradient id="si" cx="0.500" cy="0.500" r="0.600"><stop offset="0" stopColor="#fff" /><stop offset="0.450" stopColor="#48b0e8" /><stop offset="0.800" stopColor="#b344c8" /><stop offset="1" stopColor="#3a2a80" /></radialGradient>
    </defs>
    <circle cx="8" cy="8" r="7.500" fill="url(#si)" stroke="#dfe8f0" strokeWidth="0.800" />
    <path d="M8 3l3 8H5z" fill="#f4f4ff" opacity="0.800" />
  </svg>
);

const NotifIcon = () => (
  <svg width="18" height="12" viewBox="0 0 18 12" stroke="#5b7492" strokeWidth="1.300">
    <path d="M5 1.500h13M5 6h13M5 10.500h13M0 1.500h2M0 6h2M0 10.500h2" />
  </svg>
);

function App() {
  return (
    <Screen>
      <GlobalStyle />
      <MenuBar>
        <FaApple size={17} color="#fff" />
        <MenuItems>
          <MenuItem $bold>Firefox</MenuItem>
          {MENU.map((item) => (
            <MenuItem key={item}>{item}</MenuItem>
          ))}
        </MenuItems>
        <MenuStatus>
          <StatusSlot $w={14}><DeeplIcon /></StatusSlot>
          <StatusSlot $w={12} $ml={16}><Navigation size={12} color="#fff" fill="#fff" /></StatusSlot>
          <StatusSlot $w={18} $ml={14}><KeyboardIcon /></StatusSlot>
          <StatusSlot $w={20} $ml={10}><WifiIcon /></StatusSlot>
          <StatusSlot $w={34} $ml={12}><BatteryText>100 %</BatteryText></StatusSlot>
          <StatusSlot $w={22} $ml={4}><BatteryIcon /></StatusSlot>
          <StatusSlot $w={16} $ml={17}><InputBadge /></StatusSlot>
          <StatusSlot $w={61} $ml={16}><ClockText>Sat 16:24</ClockText></StatusSlot>
          <StatusSlot $w={15} $ml={21}><Search size={15} color="#fff" /></StatusSlot>
          <StatusSlot $w={16} $ml={17}><SiriIcon /></StatusSlot>
          <StatusSlot $w={18} $ml={13}><NotifIcon /></StatusSlot>
        </MenuStatus>
      </MenuBar>

      <BrowserWindow>
        <TabStrip>
          <Lights>
            <Light $color="#fc4b45" />
            <Light $color="#fdb023" />
            <Light $color="#1fc731" />
          </Lights>
          <ActiveTab>
            <Favicon />
            <TabTitle>Inscription</TabTitle>
            <TabClose><X size={14} color="#f0f0f0" strokeWidth={2} /></TabClose>
          </ActiveTab>
          <NewTab><Plus size={19} color="#e0e0e0" strokeWidth={1.600} /></NewTab>
        </TabStrip>

        <Toolbar>
          <BackButton><ArrowLeft size={18} color="#eee" strokeWidth={2} /></BackButton>
          <ToolSlot><ArrowRight size={18} color="#77777a" strokeWidth={2} /></ToolSlot>
          <ToolSlot><RotateCw size={16} color="#e8e8e8" strokeWidth={2.200} /></ToolSlot>
          <ToolSlot><HomeIcon /></ToolSlot>
          <UrlBar $w={696} $ml={68}>
            <UrlSlot $w={29} $divider><ShieldIcon /></UrlSlot>
            <UrlSlot $w={28}><Info size={14} color="#bdbdbe" strokeWidth={1.500} /></UrlSlot>
            <UrlText><UrlHost>localhost</UrlHost>:8080/Predictif-Web/signup.html</UrlText>
            <UrlSlot $w={28}><Ellipsis size={17} color="#dedede" strokeWidth={2.600} /></UrlSlot>
            <UrlSlot $w={28}><PocketIcon /></UrlSlot>
            <UrlSlot $w={29}><Star size={17} color="#dedede" strokeWidth={2} /></UrlSlot>
          </UrlBar>
          <UrlBar $w={261} $ml={10}>
            <UrlSlot $w={30}><Search size={16} color="#bdbdbe" strokeWidth={2} /></UrlSlot>
            <SearchText>Search</SearchText>
          </UrlBar>
          <ToolSlot $ml={68}><LibraryIcon /></ToolSlot>
          <ToolSlot><SidebarIcon /></ToolSlot>
          <ToolSlot><AccountIcon /></ToolSlot>
          <ToolSlot><AbpIcon /></ToolSlot>
          <ToolSlot><InfinityIcon /></ToolSlot>
          <ToolDivider />
          <ToolSlot><Hamburger /></ToolSlot>
        </Toolbar>

        <NavBar>
          <Brand>PREDICT'IF</Brand>
          <NavActive>Home</NavActive>
        </NavBar>

        <Page>
          <Title>INSCRIPTION</Title>
          <Lead>Veuillez remplir les champs suivants.</Lead>
          <SignupForm onSubmit={(e) => e.preventDefault()}>
            {FIELDS.map((f) => (
              <Row key={f.label} $gap={f.gap}>
                {f.label}
                <Field type={f.type} $w={f.w} placeholder={f.placeholder} />
              </Row>
            ))}
          </SignupForm>
          <SubmitButton type="button">M'inscrire</SubmitButton>
        </Page>
      </BrowserWindow>

      <DockArea>
        <Dock>
          {FIRST_GROUP.map((item) => <DockItem key={item.name} {...item} />)}
          <DockSeparator />
          {SECOND_GROUP.map((item) => <DockItem key={item.name} {...item} />)}
          <DockSeparator />
          {THIRD_GROUP.map((item) => <DockItem key={item.name} {...item} />)}
        </Dock>
      </DockArea>
    </Screen>
  );
}

export default App;
